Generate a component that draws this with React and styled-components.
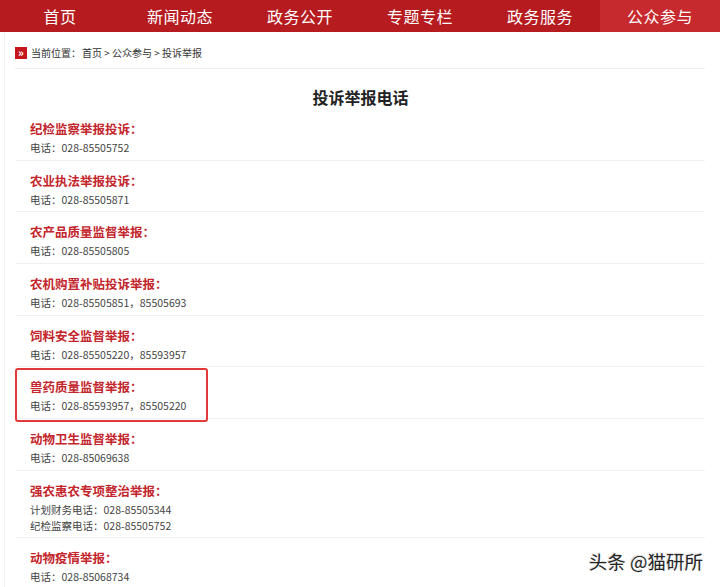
import React from "react";
import styled, { createGlobalStyle } from "styled-components";

const GlobalStyle = createGlobalStyle`
    body {
        margin: 0;
        background: #ffffff;
        font-family: "Noto Sans CJK SC", "Noto Sans", sans-serif;
    }
`;

const navItems = ["首页", "新闻动态", "政务公开", "专题专栏", "政务服务", "公众参与"];

const reports = [
    { title: "纪检监察举报投诉：", phones: ["电话：028-85505752"] },
    { title: "农业执法举报投诉：", phones: ["电话：028-85505871"] },
    { title: "农产品质量监督举报：", phones: ["电话：028-85505805"] },
    { title: "农机购置补贴投诉举报：", phones: ["电话：028-85505851，85505693"] },
    { title: "饲料安全监督举报：", phones: ["电话：028-85505220，85593957"] },
    { title: "兽药质量监督举报：", phones: ["电话：028-85593957，85505220"], marked: true },
    { title: "动物卫生监督举报：", phones: ["电话：028-85069638"] },
    { title: "强农惠农专项整治举报：", phones: ["计划财务电话：028-85505344", "纪检监察电话：028-85505752"] },
    { title: "动物疫情举报：", phones: ["电话：028-85068734"] }
];

const App = () => {
    return (
        <Page>
            <GlobalStyle />
            <Nav>
                {navItems.map(item => (
                    <NavItem key={item} active={item === "公众参与"}>
                        {item}
                    </NavItem>
                ))}
            </Nav>
            <Content>
                <Crumbs>
                    <CrumbIcon>»</CrumbIcon>
                    <CrumbLabel>当前位置：</CrumbLabel>
                    <span>首页 &gt; 公众参与 &gt; 投诉举报</span>
                </Crumbs>
                <Title>投诉举报电话</Title>
                <List>
                    {reports.map(report => (
                        <Item key={report.title}>
                            <ItemTitle>{report.title}</ItemTitle>
                            {report.phones.map(phone => (
                                <Phone key={phone}>{phone}</Phone>
                            ))}
                            {report.marked && <Marker />}
                        </Item>
                    ))}
                </List>
            </Content>
            <Watermark>头条 @猫研所</Watermark>
        </Page>
    );
};

const Page = styled.div`
    position: relative;
    width: 720px;
    height: 587px;
    overflow: hidden;
    background: #ffffff;
`;

const Nav = styled.nav`
    display: grid;
    grid-template-columns: repeat(6, 120px);
    height: 32px;
    background: #b61b20;
`;

const NavItem = styled.div`
    display: flex;
    align-items: center;
    justify-content: center;
    color: #ffffff;
    font-size: 16px;
    letter-spacing: 0.5px;
    background: ${({ active }) => (active ? "#c72a2e" : "transparent")};
`;

const Content = styled.div`
    margin-left: 4px;
    border-left: 1px solid #f3f3f3;
    padding: 0 15px 0 11px;
`;

const Crumbs = styled.div`
    display: flex;
    align-items: center;
    height: 31px;
    padding-top: 5px;
    margin-left: -1px;
    border-bottom: 1px solid #eeeeee;
    font-size: 10px;
    color: #333333;
`;

const CrumbIcon = styled.span`
    display: flex;
    align-items: center;
    justify-content: center;
    width: 12px;
    height: 12px;
    margin-right: 4px;
    background: #c4161c;
    color: #ffffff;
    font-size: 11px;
    font-weight: bold;
    line-height: 1;
`;

const CrumbLabel = styled.span`
    margin-right: 1px;
`;

const Title = styled.h1`
    margin: 0;
    padding: 17px 0 1px;
    line-height: 22px;
    text-align: center;
    font-size: 16px;
    font-weight: bold;
    color: #222222;
`;

const List = styled.div`
    display: flex;
    flex-direction: column;
`;

const Item = styled.div`
    position: relative;
    padding: 9px 0 3.67px 14px;
    border-bottom: 1px solid #f0f0f0;
`;

const ItemTitle = styled.div`
    line-height: 22px;
    font-size: 12.5px;
    font-weight: bold;
    color: #c3262c;
`;

const Phone = styled.div`
    line-height: 16px;
    font-size: 10.5px;
    color: #444444;
`;

const Marker = styled.div`
    position: absolute;
    left: -1px;
    top: 1px;
    width: 189px;
    height: 50px;
    border: 2px solid #e23a38;
    border-radius: 3px;
`;

const Watermark = styled.div`
    position: absolute;
    right: 17px;
    bottom: 13px;
    font-size: 18.5px;
    color: #222222;
    text-shadow: 1px 1px 0 #ffffff, -1px -1px 0 #dddddd;
`;

export default App;
